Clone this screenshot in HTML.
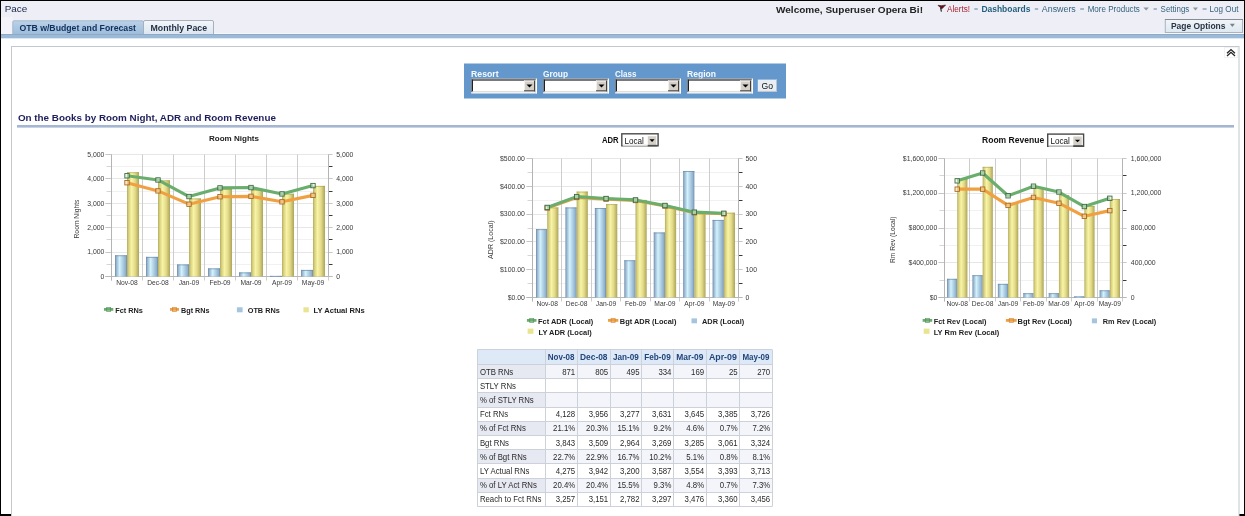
<!DOCTYPE html>
<html><head><meta charset="utf-8"><title>Pace</title>
<style>
html,body{margin:0;padding:0;background:#000;}
body{width:1245px;height:516px;overflow:hidden;font-family:"Liberation Sans", sans-serif;}
svg{display:block;font-family:"Liberation Sans", sans-serif;will-change:transform;}
</style></head><body>
<svg width="1245" height="516" viewBox="0 0 1245 516" shape-rendering="auto">
<defs>
<linearGradient id="gy" x1="0" x2="1" y1="0" y2="0">
<stop offset="0" stop-color="#b4ac60"/><stop offset="0.15" stop-color="#d8d280"/><stop offset="0.38" stop-color="#f8f4a6"/><stop offset="0.68" stop-color="#e2da88"/><stop offset="1" stop-color="#aca458"/>
</linearGradient>
<linearGradient id="gb" x1="0" x2="1" y1="0" y2="0">
<stop offset="0" stop-color="#7088a8"/><stop offset="0.12" stop-color="#98b6d0"/><stop offset="0.38" stop-color="#d2f2fc"/><stop offset="0.62" stop-color="#b2d2e6"/><stop offset="0.88" stop-color="#90b0cc"/><stop offset="1" stop-color="#6c8aa8"/>
</linearGradient>
<linearGradient id="gtab1" x1="0" x2="0" y1="0" y2="1">
<stop offset="0" stop-color="#bcd2e8"/><stop offset="1" stop-color="#9dbddc"/>
</linearGradient>
<linearGradient id="gtab2" x1="0" x2="0" y1="0" y2="1">
<stop offset="0" stop-color="#f4f6fa"/><stop offset="1" stop-color="#dce6f0"/>
</linearGradient>
<linearGradient id="gbtn" x1="0" x2="0" y1="0" y2="1">
<stop offset="0" stop-color="#f2f5f8"/><stop offset="1" stop-color="#dde8f0"/>
</linearGradient>
</defs>

<rect x="0.00" y="0.00" width="1245.00" height="516.00" fill="#000" />
<rect x="1.00" y="1.00" width="1243.00" height="513.00" fill="#ffffff" />
<rect x="1.00" y="1.00" width="1243.00" height="33.00" fill="#eeeef7" />
<text x="4.70" y="12.20" font-size="9.4" fill="#1a2846" textLength="22.60" lengthAdjust="spacingAndGlyphs" >Pace</text>
<rect x="1.00" y="33.00" width="1243.00" height="1.00" fill="#f4f8fc" />
<rect x="1.00" y="34.00" width="1243.00" height="4.00" fill="#9bbad9" />
<line x1="1.00" y1="34.50" x2="1244.00" y2="34.50" stroke="#92a9c2" stroke-width="1" />
<rect x="1.00" y="38.00" width="1243.00" height="1.00" fill="#dce8f3" />
<rect x="1.00" y="17.00" width="11.50" height="17.00" fill="#f3f3f9" />
<path d="M12.5 34 V22 Q12.5 20.5 14 20.5 H142 Q143.5 20.5 143.5 22 V34 Z" fill="url(#gtab1)"/>
<path d="M12.8 34 V22 Q12.8 20.8 14 20.8 H142 Q143.2 20.8 143.2 22" fill="none" stroke="#9fb5cc" stroke-width="0.8"/>
<path d="M143.5 34 V22 Q143.5 20.5 145 20.5 H212 Q213.5 20.5 213.5 22 V34" fill="url(#gtab2)" stroke="#a8b0bc" stroke-width="1"/>
<text x="19.40" y="30.80" font-size="8.3" fill="#112f5c" font-weight="bold" textLength="116.50" lengthAdjust="spacingAndGlyphs" >OTB w/Budget and Forecast</text>
<text x="150.50" y="30.70" font-size="8.3" fill="#1f2d42" font-weight="bold" textLength="56.60" lengthAdjust="spacingAndGlyphs" >Monthly Pace</text>
<text x="776.00" y="13.10" font-size="8.6" fill="#222" font-weight="bold" textLength="147.00" lengthAdjust="spacingAndGlyphs" >Welcome, Superuser Opera Bi!</text>
<path d="M938.0 5.3 Q941.5 6.2 945.6 5.0 L942.0 8.8 Q940.2 7.8 938.0 5.3 Z" fill="#6a1018" stroke="#301010" stroke-width="0.6"/>
<path d="M940.6 7.6 L941.4 11.6" stroke="#201010" stroke-width="1.1" fill="none"/>
<text x="947.00" y="11.80" font-size="8.4" fill="#a81e2c" textLength="23.00" lengthAdjust="spacingAndGlyphs" >Alerts!</text>
<line x1="974.30" y1="9.00" x2="977.80" y2="9.00" stroke="#58809a" stroke-width="1" />
<text x="981.40" y="11.80" font-size="8.4" fill="#23607c" font-weight="bold" textLength="49.00" lengthAdjust="spacingAndGlyphs" >Dashboards</text>
<line x1="1034.80" y1="9.00" x2="1038.20" y2="9.00" stroke="#58809a" stroke-width="1" />
<text x="1041.80" y="11.80" font-size="8.4" fill="#33627a" textLength="34.00" lengthAdjust="spacingAndGlyphs" >Answers</text>
<line x1="1080.20" y1="9.00" x2="1084.00" y2="9.00" stroke="#58809a" stroke-width="1" />
<text x="1087.70" y="11.80" font-size="8.4" fill="#33627a" textLength="52.20" lengthAdjust="spacingAndGlyphs" >More Products</text>
<path d="M1143.4 7.4 H1148.9 L1146.15 10.6 Z" fill="#8a96a0"/>
<line x1="1153.60" y1="9.00" x2="1156.90" y2="9.00" stroke="#58809a" stroke-width="1" />
<text x="1160.60" y="11.80" font-size="8.4" fill="#33627a" textLength="28.70" lengthAdjust="spacingAndGlyphs" >Settings</text>
<path d="M1192.9 7.4 H1198 L1195.45 10.6 Z" fill="#8a96a0"/>
<line x1="1202.60" y1="9.00" x2="1206.60" y2="9.00" stroke="#58809a" stroke-width="1" />
<text x="1209.60" y="11.80" font-size="8.4" fill="#33627a" textLength="28.80" lengthAdjust="spacingAndGlyphs" >Log Out</text>
<rect x="1165.3" y="19.5" width="77.2" height="13" fill="url(#gbtn)" stroke="#a8b4c0" stroke-width="1"/>
<line x1="1165.00" y1="19.50" x2="1243.00" y2="19.50" stroke="#848c96" stroke-width="1" />
<text x="1170.90" y="28.60" font-size="8.3" fill="#2c3444" font-weight="bold" textLength="54.60" lengthAdjust="spacingAndGlyphs" >Page Options</text>
<path d="M1229.8 23.8 H1234.9 L1232.35 27 Z" fill="#7a8490"/>
<rect x="11.5" y="46.5" width="1227.5" height="480" fill="#ffffff" stroke="#c2c8ce" stroke-width="1"/>
<rect x="1224.5" y="47.5" width="13" height="10" fill="none" stroke="#e6e6e6" stroke-width="1" stroke-dasharray="1 1"/>
<path d="M1227 53.2 L1231 49.6 L1235 53.2 M1227 56 L1231 52.3 L1235 56" fill="none" stroke="#222" stroke-width="1.3"/>
<rect x="464.00" y="63.50" width="322.00" height="35.00" fill="#6497cb" />
<text x="471.00" y="77.10" font-size="8.4" fill="#f4faff" font-weight="bold" textLength="27.60" lengthAdjust="spacingAndGlyphs" >Resort</text>
<rect x="471.00" y="78.60" width="66.00" height="14.70" fill="#ffffff" />
<line x1="471.00" y1="79.10" x2="537.00" y2="79.10" stroke="#808080" stroke-width="1" />
<line x1="471.50" y1="78.60" x2="471.50" y2="93.30" stroke="#808080" stroke-width="1" />
<line x1="472.00" y1="80.10" x2="536.00" y2="80.10" stroke="#202020" stroke-width="1" />
<line x1="472.50" y1="79.60" x2="472.50" y2="92.30" stroke="#202020" stroke-width="1" />
<line x1="471.00" y1="92.80" x2="537.00" y2="92.80" stroke="#ffffff" stroke-width="1" />
<line x1="536.50" y1="78.60" x2="536.50" y2="93.30" stroke="#ffffff" stroke-width="1" />
<line x1="472.00" y1="91.80" x2="536.00" y2="91.80" stroke="#d4d0c8" stroke-width="1" />
<line x1="535.50" y1="79.60" x2="535.50" y2="92.30" stroke="#d4d0c8" stroke-width="1" />
<rect x="524.00" y="80.60" width="11.00" height="10.70" fill="#d4d0c8" />
<line x1="524.00" y1="81.10" x2="535.00" y2="81.10" stroke="#f0f0f0" stroke-width="1" />
<line x1="524.50" y1="80.60" x2="524.50" y2="91.30" stroke="#f0f0f0" stroke-width="1" />
<line x1="524.00" y1="90.80" x2="535.00" y2="90.80" stroke="#404040" stroke-width="1" />
<line x1="534.50" y1="80.60" x2="534.50" y2="91.30" stroke="#404040" stroke-width="1" />
<path d="M526.50 84.45 H532.50 L529.50 87.45 Z" fill="#000"/>
<text x="543.00" y="77.10" font-size="8.4" fill="#f4faff" font-weight="bold" textLength="25.00" lengthAdjust="spacingAndGlyphs" >Group</text>
<rect x="543.00" y="78.60" width="66.00" height="14.70" fill="#ffffff" />
<line x1="543.00" y1="79.10" x2="609.00" y2="79.10" stroke="#808080" stroke-width="1" />
<line x1="543.50" y1="78.60" x2="543.50" y2="93.30" stroke="#808080" stroke-width="1" />
<line x1="544.00" y1="80.10" x2="608.00" y2="80.10" stroke="#202020" stroke-width="1" />
<line x1="544.50" y1="79.60" x2="544.50" y2="92.30" stroke="#202020" stroke-width="1" />
<line x1="543.00" y1="92.80" x2="609.00" y2="92.80" stroke="#ffffff" stroke-width="1" />
<line x1="608.50" y1="78.60" x2="608.50" y2="93.30" stroke="#ffffff" stroke-width="1" />
<line x1="544.00" y1="91.80" x2="608.00" y2="91.80" stroke="#d4d0c8" stroke-width="1" />
<line x1="607.50" y1="79.60" x2="607.50" y2="92.30" stroke="#d4d0c8" stroke-width="1" />
<rect x="596.00" y="80.60" width="11.00" height="10.70" fill="#d4d0c8" />
<line x1="596.00" y1="81.10" x2="607.00" y2="81.10" stroke="#f0f0f0" stroke-width="1" />
<line x1="596.50" y1="80.60" x2="596.50" y2="91.30" stroke="#f0f0f0" stroke-width="1" />
<line x1="596.00" y1="90.80" x2="607.00" y2="90.80" stroke="#404040" stroke-width="1" />
<line x1="606.50" y1="80.60" x2="606.50" y2="91.30" stroke="#404040" stroke-width="1" />
<path d="M598.50 84.45 H604.50 L601.50 87.45 Z" fill="#000"/>
<text x="615.00" y="77.10" font-size="8.4" fill="#f4faff" font-weight="bold" textLength="21.50" lengthAdjust="spacingAndGlyphs" >Class</text>
<rect x="615.00" y="78.60" width="66.00" height="14.70" fill="#ffffff" />
<line x1="615.00" y1="79.10" x2="681.00" y2="79.10" stroke="#808080" stroke-width="1" />
<line x1="615.50" y1="78.60" x2="615.50" y2="93.30" stroke="#808080" stroke-width="1" />
<line x1="616.00" y1="80.10" x2="680.00" y2="80.10" stroke="#202020" stroke-width="1" />
<line x1="616.50" y1="79.60" x2="616.50" y2="92.30" stroke="#202020" stroke-width="1" />
<line x1="615.00" y1="92.80" x2="681.00" y2="92.80" stroke="#ffffff" stroke-width="1" />
<line x1="680.50" y1="78.60" x2="680.50" y2="93.30" stroke="#ffffff" stroke-width="1" />
<line x1="616.00" y1="91.80" x2="680.00" y2="91.80" stroke="#d4d0c8" stroke-width="1" />
<line x1="679.50" y1="79.60" x2="679.50" y2="92.30" stroke="#d4d0c8" stroke-width="1" />
<rect x="668.00" y="80.60" width="11.00" height="10.70" fill="#d4d0c8" />
<line x1="668.00" y1="81.10" x2="679.00" y2="81.10" stroke="#f0f0f0" stroke-width="1" />
<line x1="668.50" y1="80.60" x2="668.50" y2="91.30" stroke="#f0f0f0" stroke-width="1" />
<line x1="668.00" y1="90.80" x2="679.00" y2="90.80" stroke="#404040" stroke-width="1" />
<line x1="678.50" y1="80.60" x2="678.50" y2="91.30" stroke="#404040" stroke-width="1" />
<path d="M670.50 84.45 H676.50 L673.50 87.45 Z" fill="#000"/>
<text x="687.00" y="77.10" font-size="8.4" fill="#f4faff" font-weight="bold" textLength="29.00" lengthAdjust="spacingAndGlyphs" >Region</text>
<rect x="687.00" y="78.60" width="66.00" height="14.70" fill="#ffffff" />
<line x1="687.00" y1="79.10" x2="753.00" y2="79.10" stroke="#808080" stroke-width="1" />
<line x1="687.50" y1="78.60" x2="687.50" y2="93.30" stroke="#808080" stroke-width="1" />
<line x1="688.00" y1="80.10" x2="752.00" y2="80.10" stroke="#202020" stroke-width="1" />
<line x1="688.50" y1="79.60" x2="688.50" y2="92.30" stroke="#202020" stroke-width="1" />
<line x1="687.00" y1="92.80" x2="753.00" y2="92.80" stroke="#ffffff" stroke-width="1" />
<line x1="752.50" y1="78.60" x2="752.50" y2="93.30" stroke="#ffffff" stroke-width="1" />
<line x1="688.00" y1="91.80" x2="752.00" y2="91.80" stroke="#d4d0c8" stroke-width="1" />
<line x1="751.50" y1="79.60" x2="751.50" y2="92.30" stroke="#d4d0c8" stroke-width="1" />
<rect x="740.00" y="80.60" width="11.00" height="10.70" fill="#d4d0c8" />
<line x1="740.00" y1="81.10" x2="751.00" y2="81.10" stroke="#f0f0f0" stroke-width="1" />
<line x1="740.50" y1="80.60" x2="740.50" y2="91.30" stroke="#f0f0f0" stroke-width="1" />
<line x1="740.00" y1="90.80" x2="751.00" y2="90.80" stroke="#404040" stroke-width="1" />
<line x1="750.50" y1="80.60" x2="750.50" y2="91.30" stroke="#404040" stroke-width="1" />
<path d="M742.50 84.45 H748.50 L745.50 87.45 Z" fill="#000"/>
<rect x="757.80" y="79.60" width="19.20" height="12.30" fill="#e8eef4" />
<line x1="757.80" y1="91.40" x2="777.00" y2="91.40" stroke="#b8c4d0" stroke-width="1" />
<line x1="776.50" y1="79.60" x2="776.50" y2="91.90" stroke="#b8c4d0" stroke-width="1" />
<text x="761.50" y="89.20" font-size="8.6" fill="#111" textLength="11.50" lengthAdjust="spacingAndGlyphs" >Go</text>
<text x="17.90" y="120.80" font-size="9.5" fill="#1e1e5c" font-weight="bold" textLength="258.00" lengthAdjust="spacingAndGlyphs" >On the Books by Room Night, ADR and Room Revenue</text>
<rect x="17.00" y="125.00" width="1217.00" height="2.60" fill="#a4b6d2" />
<line x1="111.50" y1="264.50" x2="328.50" y2="264.50" stroke="#f1f1f1" stroke-width="1" />
<line x1="106.50" y1="264.50" x2="111.50" y2="264.50" stroke="#d6d6d6" stroke-width="1" />
<line x1="328.50" y1="264.50" x2="332.50" y2="264.50" stroke="#3a3a3a" stroke-width="1" />
<line x1="111.50" y1="239.50" x2="328.50" y2="239.50" stroke="#f1f1f1" stroke-width="1" />
<line x1="106.50" y1="239.50" x2="111.50" y2="239.50" stroke="#d6d6d6" stroke-width="1" />
<line x1="328.50" y1="239.50" x2="332.50" y2="239.50" stroke="#3a3a3a" stroke-width="1" />
<line x1="111.50" y1="215.50" x2="328.50" y2="215.50" stroke="#f1f1f1" stroke-width="1" />
<line x1="106.50" y1="215.50" x2="111.50" y2="215.50" stroke="#d6d6d6" stroke-width="1" />
<line x1="328.50" y1="215.50" x2="332.50" y2="215.50" stroke="#3a3a3a" stroke-width="1" />
<line x1="111.50" y1="191.50" x2="328.50" y2="191.50" stroke="#f1f1f1" stroke-width="1" />
<line x1="106.50" y1="191.50" x2="111.50" y2="191.50" stroke="#d6d6d6" stroke-width="1" />
<line x1="328.50" y1="191.50" x2="332.50" y2="191.50" stroke="#3a3a3a" stroke-width="1" />
<line x1="111.50" y1="166.50" x2="328.50" y2="166.50" stroke="#f1f1f1" stroke-width="1" />
<line x1="106.50" y1="166.50" x2="111.50" y2="166.50" stroke="#d6d6d6" stroke-width="1" />
<line x1="328.50" y1="166.50" x2="332.50" y2="166.50" stroke="#3a3a3a" stroke-width="1" />
<line x1="105.50" y1="276.50" x2="332.50" y2="276.50" stroke="#e6e6e6" stroke-width="1" />
<line x1="105.50" y1="276.50" x2="111.50" y2="276.50" stroke="#c6c6c6" stroke-width="1" />
<line x1="328.50" y1="276.50" x2="332.50" y2="276.50" stroke="#c8c8c8" stroke-width="1" />
<line x1="105.50" y1="252.50" x2="332.50" y2="252.50" stroke="#e6e6e6" stroke-width="1" />
<line x1="105.50" y1="252.50" x2="111.50" y2="252.50" stroke="#c6c6c6" stroke-width="1" />
<line x1="328.50" y1="252.50" x2="332.50" y2="252.50" stroke="#c8c8c8" stroke-width="1" />
<line x1="105.50" y1="227.50" x2="332.50" y2="227.50" stroke="#e6e6e6" stroke-width="1" />
<line x1="105.50" y1="227.50" x2="111.50" y2="227.50" stroke="#c6c6c6" stroke-width="1" />
<line x1="328.50" y1="227.50" x2="332.50" y2="227.50" stroke="#c8c8c8" stroke-width="1" />
<line x1="105.50" y1="203.50" x2="332.50" y2="203.50" stroke="#e6e6e6" stroke-width="1" />
<line x1="105.50" y1="203.50" x2="111.50" y2="203.50" stroke="#c6c6c6" stroke-width="1" />
<line x1="328.50" y1="203.50" x2="332.50" y2="203.50" stroke="#c8c8c8" stroke-width="1" />
<line x1="105.50" y1="178.50" x2="332.50" y2="178.50" stroke="#e6e6e6" stroke-width="1" />
<line x1="105.50" y1="178.50" x2="111.50" y2="178.50" stroke="#c6c6c6" stroke-width="1" />
<line x1="328.50" y1="178.50" x2="332.50" y2="178.50" stroke="#c8c8c8" stroke-width="1" />
<line x1="105.50" y1="154.50" x2="332.50" y2="154.50" stroke="#e6e6e6" stroke-width="1" />
<line x1="105.50" y1="154.50" x2="111.50" y2="154.50" stroke="#c6c6c6" stroke-width="1" />
<line x1="328.50" y1="154.50" x2="332.50" y2="154.50" stroke="#c8c8c8" stroke-width="1" />
<line x1="111.50" y1="154.50" x2="111.50" y2="280.50" stroke="#cdcdcd" stroke-width="1" />
<line x1="142.50" y1="154.50" x2="142.50" y2="280.50" stroke="#cdcdcd" stroke-width="1" />
<line x1="173.50" y1="154.50" x2="173.50" y2="280.50" stroke="#cdcdcd" stroke-width="1" />
<line x1="204.50" y1="154.50" x2="204.50" y2="280.50" stroke="#cdcdcd" stroke-width="1" />
<line x1="235.50" y1="154.50" x2="235.50" y2="280.50" stroke="#cdcdcd" stroke-width="1" />
<line x1="266.50" y1="154.50" x2="266.50" y2="280.50" stroke="#cdcdcd" stroke-width="1" />
<line x1="297.50" y1="154.50" x2="297.50" y2="280.50" stroke="#cdcdcd" stroke-width="1" />
<line x1="328.50" y1="154.50" x2="328.50" y2="280.50" stroke="#cdcdcd" stroke-width="1" />
<line x1="111.50" y1="154.50" x2="111.50" y2="280.50" stroke="#b4b4b4" stroke-width="1" />
<line x1="328.50" y1="154.50" x2="328.50" y2="276.50" stroke="#b4b4b4" stroke-width="1" />
<line x1="105.50" y1="276.50" x2="332.50" y2="276.50" stroke="#b8b8b8" stroke-width="1" />
<rect x="115.00" y="255.25" width="12.00" height="21.25" fill="url(#gb)" />
<line x1="115.00" y1="255.75" x2="127.00" y2="255.75" stroke="#6c8aa8" stroke-width="1" opacity="0.7"/>
<rect x="127.00" y="172.19" width="12.00" height="104.31" fill="url(#gy)" />
<line x1="127.00" y1="172.69" x2="139.00" y2="172.69" stroke="#a8a050" stroke-width="1" opacity="0.6"/>
<rect x="146.00" y="256.86" width="12.00" height="19.64" fill="url(#gb)" />
<line x1="146.00" y1="257.36" x2="158.00" y2="257.36" stroke="#6c8aa8" stroke-width="1" opacity="0.7"/>
<rect x="158.00" y="180.32" width="12.00" height="96.18" fill="url(#gy)" />
<line x1="158.00" y1="180.82" x2="170.00" y2="180.82" stroke="#a8a050" stroke-width="1" opacity="0.6"/>
<rect x="177.00" y="264.42" width="12.00" height="12.08" fill="url(#gb)" />
<line x1="177.00" y1="264.92" x2="189.00" y2="264.92" stroke="#6c8aa8" stroke-width="1" opacity="0.7"/>
<rect x="189.00" y="198.42" width="12.00" height="78.08" fill="url(#gy)" />
<line x1="189.00" y1="198.92" x2="201.00" y2="198.92" stroke="#a8a050" stroke-width="1" opacity="0.6"/>
<rect x="208.00" y="268.35" width="12.00" height="8.15" fill="url(#gb)" />
<line x1="208.00" y1="268.85" x2="220.00" y2="268.85" stroke="#6c8aa8" stroke-width="1" opacity="0.7"/>
<rect x="220.00" y="188.98" width="12.00" height="87.52" fill="url(#gy)" />
<line x1="220.00" y1="189.48" x2="232.00" y2="189.48" stroke="#a8a050" stroke-width="1" opacity="0.6"/>
<rect x="239.00" y="272.38" width="12.00" height="4.12" fill="url(#gb)" />
<line x1="239.00" y1="272.88" x2="251.00" y2="272.88" stroke="#6c8aa8" stroke-width="1" opacity="0.7"/>
<rect x="251.00" y="189.78" width="12.00" height="86.72" fill="url(#gy)" />
<line x1="251.00" y1="190.28" x2="263.00" y2="190.28" stroke="#a8a050" stroke-width="1" opacity="0.6"/>
<rect x="270.00" y="275.89" width="12.00" height="0.61" fill="url(#gb)" />
<line x1="270.00" y1="276.39" x2="282.00" y2="276.39" stroke="#6c8aa8" stroke-width="1" opacity="0.7"/>
<rect x="282.00" y="193.71" width="12.00" height="82.79" fill="url(#gy)" />
<line x1="282.00" y1="194.21" x2="294.00" y2="194.21" stroke="#a8a050" stroke-width="1" opacity="0.6"/>
<rect x="301.00" y="269.91" width="12.00" height="6.59" fill="url(#gb)" />
<line x1="301.00" y1="270.41" x2="313.00" y2="270.41" stroke="#6c8aa8" stroke-width="1" opacity="0.7"/>
<rect x="313.00" y="185.90" width="12.00" height="90.60" fill="url(#gy)" />
<line x1="313.00" y1="186.40" x2="325.00" y2="186.40" stroke="#a8a050" stroke-width="1" opacity="0.6"/>
<polyline points="127.00,182.73 158.00,190.88 189.00,204.18 220.00,196.74 251.00,196.35 282.00,201.81 313.00,195.39" fill="none" stroke="#f0a040" stroke-width="3.1" stroke-linejoin="round"/>
<rect x="124.80" y="180.53" width="4.4" height="4.4" fill="#f8e0b0" fill-opacity="0.55" stroke="#a86a20" stroke-width="0.9"/>
<rect x="155.80" y="188.68" width="4.4" height="4.4" fill="#f8e0b0" fill-opacity="0.55" stroke="#a86a20" stroke-width="0.9"/>
<rect x="186.80" y="201.98" width="4.4" height="4.4" fill="#f8e0b0" fill-opacity="0.55" stroke="#a86a20" stroke-width="0.9"/>
<rect x="217.80" y="194.54" width="4.4" height="4.4" fill="#f8e0b0" fill-opacity="0.55" stroke="#a86a20" stroke-width="0.9"/>
<rect x="248.80" y="194.15" width="4.4" height="4.4" fill="#f8e0b0" fill-opacity="0.55" stroke="#a86a20" stroke-width="0.9"/>
<rect x="279.80" y="199.61" width="4.4" height="4.4" fill="#f8e0b0" fill-opacity="0.55" stroke="#a86a20" stroke-width="0.9"/>
<rect x="310.80" y="193.19" width="4.4" height="4.4" fill="#f8e0b0" fill-opacity="0.55" stroke="#a86a20" stroke-width="0.9"/>
<polyline points="127.00,175.78 158.00,179.97 189.00,196.54 220.00,187.90 251.00,187.56 282.00,193.91 313.00,185.59" fill="none" stroke="#6aae6e" stroke-width="3.1" stroke-linejoin="round"/>
<rect x="124.80" y="173.58" width="4.4" height="4.4" fill="#d8f0d8" fill-opacity="0.55" stroke="#3f6a46" stroke-width="0.9"/>
<rect x="155.80" y="177.77" width="4.4" height="4.4" fill="#d8f0d8" fill-opacity="0.55" stroke="#3f6a46" stroke-width="0.9"/>
<rect x="186.80" y="194.34" width="4.4" height="4.4" fill="#d8f0d8" fill-opacity="0.55" stroke="#3f6a46" stroke-width="0.9"/>
<rect x="217.80" y="185.70" width="4.4" height="4.4" fill="#d8f0d8" fill-opacity="0.55" stroke="#3f6a46" stroke-width="0.9"/>
<rect x="248.80" y="185.36" width="4.4" height="4.4" fill="#d8f0d8" fill-opacity="0.55" stroke="#3f6a46" stroke-width="0.9"/>
<rect x="279.80" y="191.71" width="4.4" height="4.4" fill="#d8f0d8" fill-opacity="0.55" stroke="#3f6a46" stroke-width="0.9"/>
<rect x="310.80" y="183.39" width="4.4" height="4.4" fill="#d8f0d8" fill-opacity="0.55" stroke="#3f6a46" stroke-width="0.9"/>
<text x="104.40" y="278.70" font-size="6.9" fill="#3a3a3a" text-anchor="end" >0</text>
<text x="336.20" y="278.70" font-size="6.9" fill="#3a3a3a" >0</text>
<text x="104.40" y="254.30" font-size="6.9" fill="#3a3a3a" text-anchor="end" >1,000</text>
<text x="336.20" y="254.30" font-size="6.9" fill="#3a3a3a" >1,000</text>
<text x="104.40" y="229.90" font-size="6.9" fill="#3a3a3a" text-anchor="end" >2,000</text>
<text x="336.20" y="229.90" font-size="6.9" fill="#3a3a3a" >2,000</text>
<text x="104.40" y="205.50" font-size="6.9" fill="#3a3a3a" text-anchor="end" >3,000</text>
<text x="336.20" y="205.50" font-size="6.9" fill="#3a3a3a" >3,000</text>
<text x="104.40" y="181.10" font-size="6.9" fill="#3a3a3a" text-anchor="end" >4,000</text>
<text x="336.20" y="181.10" font-size="6.9" fill="#3a3a3a" >4,000</text>
<text x="104.40" y="156.70" font-size="6.9" fill="#3a3a3a" text-anchor="end" >5,000</text>
<text x="336.20" y="156.70" font-size="6.9" fill="#3a3a3a" >5,000</text>
<text x="127.00" y="285.00" font-size="6.7" fill="#3a3a3a" text-anchor="middle" >Nov-08</text>
<text x="158.00" y="285.00" font-size="6.7" fill="#3a3a3a" text-anchor="middle" >Dec-08</text>
<text x="189.00" y="285.00" font-size="6.7" fill="#3a3a3a" text-anchor="middle" >Jan-09</text>
<text x="220.00" y="285.00" font-size="6.7" fill="#3a3a3a" text-anchor="middle" >Feb-09</text>
<text x="251.00" y="285.00" font-size="6.7" fill="#3a3a3a" text-anchor="middle" >Mar-09</text>
<text x="282.00" y="285.00" font-size="6.7" fill="#3a3a3a" text-anchor="middle" >Apr-09</text>
<text x="313.00" y="285.00" font-size="6.7" fill="#3a3a3a" text-anchor="middle" >May-09</text>
<text x="0" y="0" font-size="7.4" fill="#3a3a3a" text-anchor="middle" textLength="39.00" lengthAdjust="spacingAndGlyphs" transform="translate(78.50,219.00) rotate(-90)">Room Nights</text>
<text x="234.00" y="141.40" font-size="7.9" fill="#222" font-weight="bold" text-anchor="middle" textLength="50.00" lengthAdjust="spacingAndGlyphs" >Room Nights</text>
<rect x="104.00" y="308.00" width="9.30" height="2.80" fill="#6aae6e" />
<rect x="106.65" y="307.40" width="4.0" height="4.0" fill="none" stroke="#4f8a56" stroke-width="0.8" opacity="0.8"/>
<text x="115.20" y="312.90" font-size="7.3" fill="#1e1e1e" font-weight="bold" textLength="27.70" lengthAdjust="spacingAndGlyphs" >Fct RNs</text>
<rect x="170.00" y="308.00" width="9.00" height="2.80" fill="#f0a040" />
<rect x="172.50" y="307.40" width="4.0" height="4.0" fill="none" stroke="#c88030" stroke-width="0.8" opacity="0.8"/>
<text x="181.00" y="312.90" font-size="7.3" fill="#1e1e1e" font-weight="bold" textLength="28.50" lengthAdjust="spacingAndGlyphs" >Bgt RNs</text>
<rect x="236.90" y="307.30" width="5.70" height="5.00" fill="#a4c4e0" />
<text x="247.70" y="312.90" font-size="7.3" fill="#1e1e1e" font-weight="bold" textLength="32.10" lengthAdjust="spacingAndGlyphs" >OTB RNs</text>
<rect x="303.40" y="307.30" width="5.40" height="5.00" fill="#e8e490" />
<text x="313.50" y="312.90" font-size="7.3" fill="#1e1e1e" font-weight="bold" textLength="51.30" lengthAdjust="spacingAndGlyphs" >LY Actual RNs</text>
<line x1="532.50" y1="283.50" x2="738.50" y2="283.50" stroke="#f1f1f1" stroke-width="1" />
<line x1="527.50" y1="283.50" x2="532.50" y2="283.50" stroke="#d6d6d6" stroke-width="1" />
<line x1="738.50" y1="283.50" x2="742.50" y2="283.50" stroke="#3a3a3a" stroke-width="1" />
<line x1="532.50" y1="255.50" x2="738.50" y2="255.50" stroke="#f1f1f1" stroke-width="1" />
<line x1="527.50" y1="255.50" x2="532.50" y2="255.50" stroke="#d6d6d6" stroke-width="1" />
<line x1="738.50" y1="255.50" x2="742.50" y2="255.50" stroke="#3a3a3a" stroke-width="1" />
<line x1="532.50" y1="228.50" x2="738.50" y2="228.50" stroke="#f1f1f1" stroke-width="1" />
<line x1="527.50" y1="228.50" x2="532.50" y2="228.50" stroke="#d6d6d6" stroke-width="1" />
<line x1="738.50" y1="228.50" x2="742.50" y2="228.50" stroke="#3a3a3a" stroke-width="1" />
<line x1="532.50" y1="200.50" x2="738.50" y2="200.50" stroke="#f1f1f1" stroke-width="1" />
<line x1="527.50" y1="200.50" x2="532.50" y2="200.50" stroke="#d6d6d6" stroke-width="1" />
<line x1="738.50" y1="200.50" x2="742.50" y2="200.50" stroke="#3a3a3a" stroke-width="1" />
<line x1="532.50" y1="172.50" x2="738.50" y2="172.50" stroke="#f1f1f1" stroke-width="1" />
<line x1="527.50" y1="172.50" x2="532.50" y2="172.50" stroke="#d6d6d6" stroke-width="1" />
<line x1="738.50" y1="172.50" x2="742.50" y2="172.50" stroke="#3a3a3a" stroke-width="1" />
<line x1="526.50" y1="297.50" x2="742.50" y2="297.50" stroke="#e6e6e6" stroke-width="1" />
<line x1="526.50" y1="297.50" x2="532.50" y2="297.50" stroke="#c6c6c6" stroke-width="1" />
<line x1="738.50" y1="297.50" x2="742.50" y2="297.50" stroke="#c8c8c8" stroke-width="1" />
<line x1="526.50" y1="269.50" x2="742.50" y2="269.50" stroke="#e6e6e6" stroke-width="1" />
<line x1="526.50" y1="269.50" x2="532.50" y2="269.50" stroke="#c6c6c6" stroke-width="1" />
<line x1="738.50" y1="269.50" x2="742.50" y2="269.50" stroke="#c8c8c8" stroke-width="1" />
<line x1="526.50" y1="241.50" x2="742.50" y2="241.50" stroke="#e6e6e6" stroke-width="1" />
<line x1="526.50" y1="241.50" x2="532.50" y2="241.50" stroke="#c6c6c6" stroke-width="1" />
<line x1="738.50" y1="241.50" x2="742.50" y2="241.50" stroke="#c8c8c8" stroke-width="1" />
<line x1="526.50" y1="214.50" x2="742.50" y2="214.50" stroke="#e6e6e6" stroke-width="1" />
<line x1="526.50" y1="214.50" x2="532.50" y2="214.50" stroke="#c6c6c6" stroke-width="1" />
<line x1="738.50" y1="214.50" x2="742.50" y2="214.50" stroke="#c8c8c8" stroke-width="1" />
<line x1="526.50" y1="186.50" x2="742.50" y2="186.50" stroke="#e6e6e6" stroke-width="1" />
<line x1="526.50" y1="186.50" x2="532.50" y2="186.50" stroke="#c6c6c6" stroke-width="1" />
<line x1="738.50" y1="186.50" x2="742.50" y2="186.50" stroke="#c8c8c8" stroke-width="1" />
<line x1="526.50" y1="158.50" x2="742.50" y2="158.50" stroke="#e6e6e6" stroke-width="1" />
<line x1="526.50" y1="158.50" x2="532.50" y2="158.50" stroke="#c6c6c6" stroke-width="1" />
<line x1="738.50" y1="158.50" x2="742.50" y2="158.50" stroke="#c8c8c8" stroke-width="1" />
<line x1="532.50" y1="158.50" x2="532.50" y2="301.50" stroke="#cdcdcd" stroke-width="1" />
<line x1="561.50" y1="158.50" x2="561.50" y2="301.50" stroke="#cdcdcd" stroke-width="1" />
<line x1="591.50" y1="158.50" x2="591.50" y2="301.50" stroke="#cdcdcd" stroke-width="1" />
<line x1="620.50" y1="158.50" x2="620.50" y2="301.50" stroke="#cdcdcd" stroke-width="1" />
<line x1="650.50" y1="158.50" x2="650.50" y2="301.50" stroke="#cdcdcd" stroke-width="1" />
<line x1="679.50" y1="158.50" x2="679.50" y2="301.50" stroke="#cdcdcd" stroke-width="1" />
<line x1="709.50" y1="158.50" x2="709.50" y2="301.50" stroke="#cdcdcd" stroke-width="1" />
<line x1="738.50" y1="158.50" x2="738.50" y2="301.50" stroke="#cdcdcd" stroke-width="1" />
<line x1="532.50" y1="158.50" x2="532.50" y2="301.50" stroke="#b4b4b4" stroke-width="1" />
<line x1="738.50" y1="158.50" x2="738.50" y2="297.50" stroke="#b4b4b4" stroke-width="1" />
<line x1="526.50" y1="297.50" x2="742.50" y2="297.50" stroke="#b8b8b8" stroke-width="1" />
<rect x="536.01" y="229.11" width="11.20" height="68.39" fill="url(#gb)" />
<line x1="536.01" y1="229.61" x2="547.21" y2="229.61" stroke="#6c8aa8" stroke-width="1" opacity="0.7"/>
<rect x="547.21" y="207.43" width="11.20" height="90.07" fill="url(#gy)" />
<line x1="547.21" y1="207.93" x2="558.41" y2="207.93" stroke="#a8a050" stroke-width="1" opacity="0.6"/>
<rect x="565.44" y="207.43" width="11.20" height="90.07" fill="url(#gb)" />
<line x1="565.44" y1="207.93" x2="576.64" y2="207.93" stroke="#6c8aa8" stroke-width="1" opacity="0.7"/>
<rect x="576.64" y="191.58" width="11.20" height="105.92" fill="url(#gy)" />
<line x1="576.64" y1="192.08" x2="587.84" y2="192.08" stroke="#a8a050" stroke-width="1" opacity="0.6"/>
<rect x="594.87" y="207.98" width="11.20" height="89.52" fill="url(#gb)" />
<line x1="594.87" y1="208.48" x2="606.07" y2="208.48" stroke="#6c8aa8" stroke-width="1" opacity="0.7"/>
<rect x="606.07" y="204.09" width="11.20" height="93.41" fill="url(#gy)" />
<line x1="606.07" y1="204.59" x2="617.27" y2="204.59" stroke="#a8a050" stroke-width="1" opacity="0.6"/>
<rect x="624.30" y="260.25" width="11.20" height="37.25" fill="url(#gb)" />
<line x1="624.30" y1="260.75" x2="635.50" y2="260.75" stroke="#6c8aa8" stroke-width="1" opacity="0.7"/>
<rect x="635.50" y="199.92" width="11.20" height="97.58" fill="url(#gy)" />
<line x1="635.50" y1="200.42" x2="646.70" y2="200.42" stroke="#a8a050" stroke-width="1" opacity="0.6"/>
<rect x="653.73" y="232.45" width="11.20" height="65.05" fill="url(#gb)" />
<line x1="653.73" y1="232.95" x2="664.93" y2="232.95" stroke="#6c8aa8" stroke-width="1" opacity="0.7"/>
<rect x="664.93" y="207.98" width="11.20" height="89.52" fill="url(#gy)" />
<line x1="664.93" y1="208.48" x2="676.13" y2="208.48" stroke="#a8a050" stroke-width="1" opacity="0.6"/>
<rect x="683.16" y="171.01" width="11.20" height="126.49" fill="url(#gb)" />
<line x1="683.16" y1="171.51" x2="694.36" y2="171.51" stroke="#6c8aa8" stroke-width="1" opacity="0.7"/>
<rect x="694.36" y="213.27" width="11.20" height="84.23" fill="url(#gy)" />
<line x1="694.36" y1="213.77" x2="705.56" y2="213.77" stroke="#a8a050" stroke-width="1" opacity="0.6"/>
<rect x="712.59" y="219.94" width="11.20" height="77.56" fill="url(#gb)" />
<line x1="712.59" y1="220.44" x2="723.79" y2="220.44" stroke="#6c8aa8" stroke-width="1" opacity="0.7"/>
<rect x="723.79" y="212.71" width="11.20" height="84.79" fill="url(#gy)" />
<line x1="723.79" y1="213.21" x2="734.99" y2="213.21" stroke="#a8a050" stroke-width="1" opacity="0.6"/>
<polyline points="547.21,207.98 576.64,197.42 606.07,199.09 635.50,200.48 664.93,206.04 694.36,212.71 723.79,213.82" fill="none" stroke="#f0a040" stroke-width="3.1" stroke-linejoin="round"/>
<rect x="545.01" y="205.78" width="4.4" height="4.4" fill="#f8e0b0" fill-opacity="0.55" stroke="#a86a20" stroke-width="0.9"/>
<rect x="574.44" y="195.22" width="4.4" height="4.4" fill="#f8e0b0" fill-opacity="0.55" stroke="#a86a20" stroke-width="0.9"/>
<rect x="603.87" y="196.89" width="4.4" height="4.4" fill="#f8e0b0" fill-opacity="0.55" stroke="#a86a20" stroke-width="0.9"/>
<rect x="633.30" y="198.28" width="4.4" height="4.4" fill="#f8e0b0" fill-opacity="0.55" stroke="#a86a20" stroke-width="0.9"/>
<rect x="662.73" y="203.84" width="4.4" height="4.4" fill="#f8e0b0" fill-opacity="0.55" stroke="#a86a20" stroke-width="0.9"/>
<rect x="692.16" y="210.51" width="4.4" height="4.4" fill="#f8e0b0" fill-opacity="0.55" stroke="#a86a20" stroke-width="0.9"/>
<rect x="721.59" y="211.62" width="4.4" height="4.4" fill="#f8e0b0" fill-opacity="0.55" stroke="#a86a20" stroke-width="0.9"/>
<polyline points="547.21,207.43 576.64,196.59 606.07,198.53 635.50,199.92 664.93,205.48 694.36,212.15 723.79,213.27" fill="none" stroke="#6aae6e" stroke-width="3.1" stroke-linejoin="round"/>
<rect x="545.01" y="205.23" width="4.4" height="4.4" fill="#d8f0d8" fill-opacity="0.55" stroke="#3f6a46" stroke-width="0.9"/>
<rect x="574.44" y="194.39" width="4.4" height="4.4" fill="#d8f0d8" fill-opacity="0.55" stroke="#3f6a46" stroke-width="0.9"/>
<rect x="603.87" y="196.33" width="4.4" height="4.4" fill="#d8f0d8" fill-opacity="0.55" stroke="#3f6a46" stroke-width="0.9"/>
<rect x="633.30" y="197.72" width="4.4" height="4.4" fill="#d8f0d8" fill-opacity="0.55" stroke="#3f6a46" stroke-width="0.9"/>
<rect x="662.73" y="203.28" width="4.4" height="4.4" fill="#d8f0d8" fill-opacity="0.55" stroke="#3f6a46" stroke-width="0.9"/>
<rect x="692.16" y="209.95" width="4.4" height="4.4" fill="#d8f0d8" fill-opacity="0.55" stroke="#3f6a46" stroke-width="0.9"/>
<rect x="721.59" y="211.07" width="4.4" height="4.4" fill="#d8f0d8" fill-opacity="0.55" stroke="#3f6a46" stroke-width="0.9"/>
<text x="524.90" y="299.70" font-size="6.9" fill="#3a3a3a" text-anchor="end" >$0.00</text>
<text x="745.50" y="299.70" font-size="6.9" fill="#3a3a3a" >0</text>
<text x="524.90" y="271.90" font-size="6.9" fill="#3a3a3a" text-anchor="end" >$100.00</text>
<text x="745.50" y="271.90" font-size="6.9" fill="#3a3a3a" >100</text>
<text x="524.90" y="244.10" font-size="6.9" fill="#3a3a3a" text-anchor="end" >$200.00</text>
<text x="745.50" y="244.10" font-size="6.9" fill="#3a3a3a" >200</text>
<text x="524.90" y="216.30" font-size="6.9" fill="#3a3a3a" text-anchor="end" >$300.00</text>
<text x="745.50" y="216.30" font-size="6.9" fill="#3a3a3a" >300</text>
<text x="524.90" y="188.50" font-size="6.9" fill="#3a3a3a" text-anchor="end" >$400.00</text>
<text x="745.50" y="188.50" font-size="6.9" fill="#3a3a3a" >400</text>
<text x="524.90" y="160.70" font-size="6.9" fill="#3a3a3a" text-anchor="end" >$500.00</text>
<text x="745.50" y="160.70" font-size="6.9" fill="#3a3a3a" >500</text>
<text x="547.21" y="305.70" font-size="6.7" fill="#3a3a3a" text-anchor="middle" >Nov-08</text>
<text x="576.64" y="305.70" font-size="6.7" fill="#3a3a3a" text-anchor="middle" >Dec-08</text>
<text x="606.07" y="305.70" font-size="6.7" fill="#3a3a3a" text-anchor="middle" >Jan-09</text>
<text x="635.50" y="305.70" font-size="6.7" fill="#3a3a3a" text-anchor="middle" >Feb-09</text>
<text x="664.93" y="305.70" font-size="6.7" fill="#3a3a3a" text-anchor="middle" >Mar-09</text>
<text x="694.36" y="305.70" font-size="6.7" fill="#3a3a3a" text-anchor="middle" >Apr-09</text>
<text x="723.79" y="305.70" font-size="6.7" fill="#3a3a3a" text-anchor="middle" >May-09</text>
<text x="0" y="0" font-size="7.4" fill="#3a3a3a" text-anchor="middle" textLength="38.40" lengthAdjust="spacingAndGlyphs" transform="translate(492.80,239.70) rotate(-90)">ADR (Local)</text>
<text x="602.00" y="143.40" font-size="8.5" fill="#111" font-weight="bold" textLength="16.60" lengthAdjust="spacingAndGlyphs" >ADR</text>
<rect x="621.10" y="133.10" width="37.70" height="13.40" fill="#ffffff" />
<rect x="621.80" y="133.80" width="36.30" height="12.00" fill="none" stroke="#4a4a4a" stroke-width="1.4"/>
<line x1="622.70" y1="145.50" x2="647.80" y2="145.50" stroke="#d8d8d8" stroke-width="1.6" />
<rect x="647.80" y="136.20" width="8.50" height="8.90" fill="#d4d0c8" />
<line x1="647.80" y1="145.60" x2="657.30" y2="145.60" stroke="#505050" stroke-width="1.5" />
<path d="M649.45 139.35 H654.65 L652.05 142.05 Z" fill="#000"/>
<text x="624.50" y="143.50" font-size="8.6" fill="#111" textLength="19.40" lengthAdjust="spacingAndGlyphs" >Local</text>
<rect x="526.90" y="319.00" width="9.60" height="2.80" fill="#6aae6e" />
<rect x="529.70" y="318.40" width="4.0" height="4.0" fill="none" stroke="#4f8a56" stroke-width="0.8" opacity="0.8"/>
<text x="538.00" y="323.70" font-size="7.3" fill="#1e1e1e" font-weight="bold" textLength="55.30" lengthAdjust="spacingAndGlyphs" >Fct ADR (Local)</text>
<rect x="608.00" y="319.00" width="10.30" height="2.80" fill="#f0a040" />
<rect x="611.15" y="318.40" width="4.0" height="4.0" fill="none" stroke="#c88030" stroke-width="0.8" opacity="0.8"/>
<text x="619.80" y="323.70" font-size="7.3" fill="#1e1e1e" font-weight="bold" textLength="56.60" lengthAdjust="spacingAndGlyphs" >Bgt ADR (Local)</text>
<rect x="691.50" y="318.40" width="5.50" height="4.90" fill="#a4c4e0" />
<text x="702.00" y="323.70" font-size="7.3" fill="#1e1e1e" font-weight="bold" textLength="42.20" lengthAdjust="spacingAndGlyphs" >ADR (Local)</text>
<rect x="527.60" y="328.60" width="5.80" height="5.20" fill="#e8e490" />
<text x="538.60" y="334.70" font-size="7.3" fill="#1e1e1e" font-weight="bold" textLength="53.20" lengthAdjust="spacingAndGlyphs" >LY ADR (Local)</text>
<line x1="944.50" y1="280.50" x2="1122.50" y2="280.50" stroke="#f1f1f1" stroke-width="1" />
<line x1="939.50" y1="280.50" x2="944.50" y2="280.50" stroke="#d6d6d6" stroke-width="1" />
<line x1="1122.50" y1="280.50" x2="1126.50" y2="280.50" stroke="#3a3a3a" stroke-width="1" />
<line x1="944.50" y1="245.50" x2="1122.50" y2="245.50" stroke="#f1f1f1" stroke-width="1" />
<line x1="939.50" y1="245.50" x2="944.50" y2="245.50" stroke="#d6d6d6" stroke-width="1" />
<line x1="1122.50" y1="245.50" x2="1126.50" y2="245.50" stroke="#3a3a3a" stroke-width="1" />
<line x1="944.50" y1="210.50" x2="1122.50" y2="210.50" stroke="#f1f1f1" stroke-width="1" />
<line x1="939.50" y1="210.50" x2="944.50" y2="210.50" stroke="#d6d6d6" stroke-width="1" />
<line x1="1122.50" y1="210.50" x2="1126.50" y2="210.50" stroke="#3a3a3a" stroke-width="1" />
<line x1="944.50" y1="175.50" x2="1122.50" y2="175.50" stroke="#f1f1f1" stroke-width="1" />
<line x1="939.50" y1="175.50" x2="944.50" y2="175.50" stroke="#d6d6d6" stroke-width="1" />
<line x1="1122.50" y1="175.50" x2="1126.50" y2="175.50" stroke="#3a3a3a" stroke-width="1" />
<line x1="938.50" y1="297.50" x2="1126.50" y2="297.50" stroke="#e6e6e6" stroke-width="1" />
<line x1="938.50" y1="297.50" x2="944.50" y2="297.50" stroke="#c6c6c6" stroke-width="1" />
<line x1="1122.50" y1="297.50" x2="1126.50" y2="297.50" stroke="#c8c8c8" stroke-width="1" />
<line x1="938.50" y1="262.50" x2="1126.50" y2="262.50" stroke="#e6e6e6" stroke-width="1" />
<line x1="938.50" y1="262.50" x2="944.50" y2="262.50" stroke="#c6c6c6" stroke-width="1" />
<line x1="1122.50" y1="262.50" x2="1126.50" y2="262.50" stroke="#c8c8c8" stroke-width="1" />
<line x1="938.50" y1="228.50" x2="1126.50" y2="228.50" stroke="#e6e6e6" stroke-width="1" />
<line x1="938.50" y1="228.50" x2="944.50" y2="228.50" stroke="#c6c6c6" stroke-width="1" />
<line x1="1122.50" y1="228.50" x2="1126.50" y2="228.50" stroke="#c8c8c8" stroke-width="1" />
<line x1="938.50" y1="193.50" x2="1126.50" y2="193.50" stroke="#e6e6e6" stroke-width="1" />
<line x1="938.50" y1="193.50" x2="944.50" y2="193.50" stroke="#c6c6c6" stroke-width="1" />
<line x1="1122.50" y1="193.50" x2="1126.50" y2="193.50" stroke="#c8c8c8" stroke-width="1" />
<line x1="938.50" y1="158.50" x2="1126.50" y2="158.50" stroke="#e6e6e6" stroke-width="1" />
<line x1="938.50" y1="158.50" x2="944.50" y2="158.50" stroke="#c6c6c6" stroke-width="1" />
<line x1="1122.50" y1="158.50" x2="1126.50" y2="158.50" stroke="#c8c8c8" stroke-width="1" />
<line x1="944.50" y1="158.50" x2="944.50" y2="301.50" stroke="#cdcdcd" stroke-width="1" />
<line x1="969.50" y1="158.50" x2="969.50" y2="301.50" stroke="#cdcdcd" stroke-width="1" />
<line x1="995.50" y1="158.50" x2="995.50" y2="301.50" stroke="#cdcdcd" stroke-width="1" />
<line x1="1020.50" y1="158.50" x2="1020.50" y2="301.50" stroke="#cdcdcd" stroke-width="1" />
<line x1="1046.50" y1="158.50" x2="1046.50" y2="301.50" stroke="#cdcdcd" stroke-width="1" />
<line x1="1071.50" y1="158.50" x2="1071.50" y2="301.50" stroke="#cdcdcd" stroke-width="1" />
<line x1="1097.50" y1="158.50" x2="1097.50" y2="301.50" stroke="#cdcdcd" stroke-width="1" />
<line x1="1122.50" y1="158.50" x2="1122.50" y2="301.50" stroke="#cdcdcd" stroke-width="1" />
<line x1="944.50" y1="158.50" x2="944.50" y2="301.50" stroke="#b4b4b4" stroke-width="1" />
<line x1="1122.50" y1="158.50" x2="1122.50" y2="297.50" stroke="#b4b4b4" stroke-width="1" />
<line x1="938.50" y1="297.50" x2="1126.50" y2="297.50" stroke="#b8b8b8" stroke-width="1" />
<rect x="947.01" y="278.82" width="10.20" height="18.68" fill="url(#gb)" />
<line x1="947.01" y1="279.32" x2="957.21" y2="279.32" stroke="#6c8aa8" stroke-width="1" opacity="0.7"/>
<rect x="957.21" y="178.92" width="10.20" height="118.58" fill="url(#gy)" />
<line x1="957.21" y1="179.42" x2="967.41" y2="179.42" stroke="#a8a050" stroke-width="1" opacity="0.6"/>
<rect x="972.44" y="275.17" width="10.20" height="22.33" fill="url(#gb)" />
<line x1="972.44" y1="275.67" x2="982.64" y2="275.67" stroke="#6c8aa8" stroke-width="1" opacity="0.7"/>
<rect x="982.64" y="166.84" width="10.20" height="130.66" fill="url(#gy)" />
<line x1="982.64" y1="167.34" x2="992.84" y2="167.34" stroke="#a8a050" stroke-width="1" opacity="0.6"/>
<rect x="997.87" y="283.86" width="10.20" height="13.64" fill="url(#gb)" />
<line x1="997.87" y1="284.36" x2="1008.07" y2="284.36" stroke="#6c8aa8" stroke-width="1" opacity="0.7"/>
<rect x="1008.07" y="202.81" width="10.20" height="94.69" fill="url(#gy)" />
<line x1="1008.07" y1="203.31" x2="1018.27" y2="203.31" stroke="#a8a050" stroke-width="1" opacity="0.6"/>
<rect x="1023.30" y="293.16" width="10.20" height="4.34" fill="url(#gb)" />
<line x1="1023.30" y1="293.66" x2="1033.50" y2="293.66" stroke="#6c8aa8" stroke-width="1" opacity="0.7"/>
<rect x="1033.50" y="187.95" width="10.20" height="109.55" fill="url(#gy)" />
<line x1="1033.50" y1="188.45" x2="1043.70" y2="188.45" stroke="#a8a050" stroke-width="1" opacity="0.6"/>
<rect x="1048.73" y="293.16" width="10.20" height="4.34" fill="url(#gb)" />
<line x1="1048.73" y1="293.66" x2="1058.93" y2="293.66" stroke="#6c8aa8" stroke-width="1" opacity="0.7"/>
<rect x="1058.93" y="195.16" width="10.20" height="102.34" fill="url(#gy)" />
<line x1="1058.93" y1="195.66" x2="1069.13" y2="195.66" stroke="#a8a050" stroke-width="1" opacity="0.6"/>
<rect x="1074.16" y="296.37" width="10.20" height="1.13" fill="url(#gb)" />
<line x1="1074.16" y1="296.87" x2="1084.36" y2="296.87" stroke="#6c8aa8" stroke-width="1" opacity="0.7"/>
<rect x="1084.36" y="205.93" width="10.20" height="91.57" fill="url(#gy)" />
<line x1="1084.36" y1="206.43" x2="1094.56" y2="206.43" stroke="#a8a050" stroke-width="1" opacity="0.6"/>
<rect x="1099.59" y="290.29" width="10.20" height="7.21" fill="url(#gb)" />
<line x1="1099.59" y1="290.79" x2="1109.79" y2="290.79" stroke="#6c8aa8" stroke-width="1" opacity="0.7"/>
<rect x="1109.79" y="198.98" width="10.20" height="98.52" fill="url(#gy)" />
<line x1="1109.79" y1="199.48" x2="1119.99" y2="199.48" stroke="#a8a050" stroke-width="1" opacity="0.6"/>
<polyline points="957.21,189.17 982.64,189.17 1008.07,205.41 1033.50,197.42 1058.93,203.24 1084.36,216.27 1109.79,210.62" fill="none" stroke="#f0a040" stroke-width="3.1" stroke-linejoin="round"/>
<rect x="955.01" y="186.97" width="4.4" height="4.4" fill="#f8e0b0" fill-opacity="0.55" stroke="#a86a20" stroke-width="0.9"/>
<rect x="980.44" y="186.97" width="4.4" height="4.4" fill="#f8e0b0" fill-opacity="0.55" stroke="#a86a20" stroke-width="0.9"/>
<rect x="1005.87" y="203.21" width="4.4" height="4.4" fill="#f8e0b0" fill-opacity="0.55" stroke="#a86a20" stroke-width="0.9"/>
<rect x="1031.30" y="195.22" width="4.4" height="4.4" fill="#f8e0b0" fill-opacity="0.55" stroke="#a86a20" stroke-width="0.9"/>
<rect x="1056.73" y="201.04" width="4.4" height="4.4" fill="#f8e0b0" fill-opacity="0.55" stroke="#a86a20" stroke-width="0.9"/>
<rect x="1082.16" y="214.07" width="4.4" height="4.4" fill="#f8e0b0" fill-opacity="0.55" stroke="#a86a20" stroke-width="0.9"/>
<rect x="1107.59" y="208.43" width="4.4" height="4.4" fill="#f8e0b0" fill-opacity="0.55" stroke="#a86a20" stroke-width="0.9"/>
<polyline points="957.21,180.83 982.64,173.01 1008.07,195.77 1033.50,186.21 1058.93,192.03 1084.36,206.54 1109.79,198.29" fill="none" stroke="#6aae6e" stroke-width="3.1" stroke-linejoin="round"/>
<rect x="955.01" y="178.63" width="4.4" height="4.4" fill="#d8f0d8" fill-opacity="0.55" stroke="#3f6a46" stroke-width="0.9"/>
<rect x="980.44" y="170.81" width="4.4" height="4.4" fill="#d8f0d8" fill-opacity="0.55" stroke="#3f6a46" stroke-width="0.9"/>
<rect x="1005.87" y="193.57" width="4.4" height="4.4" fill="#d8f0d8" fill-opacity="0.55" stroke="#3f6a46" stroke-width="0.9"/>
<rect x="1031.30" y="184.01" width="4.4" height="4.4" fill="#d8f0d8" fill-opacity="0.55" stroke="#3f6a46" stroke-width="0.9"/>
<rect x="1056.73" y="189.83" width="4.4" height="4.4" fill="#d8f0d8" fill-opacity="0.55" stroke="#3f6a46" stroke-width="0.9"/>
<rect x="1082.16" y="204.34" width="4.4" height="4.4" fill="#d8f0d8" fill-opacity="0.55" stroke="#3f6a46" stroke-width="0.9"/>
<rect x="1107.59" y="196.09" width="4.4" height="4.4" fill="#d8f0d8" fill-opacity="0.55" stroke="#3f6a46" stroke-width="0.9"/>
<text x="937.30" y="299.70" font-size="6.9" fill="#3a3a3a" text-anchor="end" >$0</text>
<text x="1130.80" y="299.70" font-size="6.9" fill="#3a3a3a" >0</text>
<text x="937.30" y="264.95" font-size="6.9" fill="#3a3a3a" text-anchor="end" >$400,000</text>
<text x="1130.80" y="264.95" font-size="6.9" fill="#3a3a3a" >400,000</text>
<text x="937.30" y="230.20" font-size="6.9" fill="#3a3a3a" text-anchor="end" >$800,000</text>
<text x="1130.80" y="230.20" font-size="6.9" fill="#3a3a3a" >800,000</text>
<text x="937.30" y="195.45" font-size="6.9" fill="#3a3a3a" text-anchor="end" >$1,200,000</text>
<text x="1130.80" y="195.45" font-size="6.9" fill="#3a3a3a" >1,200,000</text>
<text x="937.30" y="160.70" font-size="6.9" fill="#3a3a3a" text-anchor="end" >$1,600,000</text>
<text x="1130.80" y="160.70" font-size="6.9" fill="#3a3a3a" >1,600,000</text>
<text x="957.21" y="305.70" font-size="6.7" fill="#3a3a3a" text-anchor="middle" >Nov-08</text>
<text x="982.64" y="305.70" font-size="6.7" fill="#3a3a3a" text-anchor="middle" >Dec-08</text>
<text x="1008.07" y="305.70" font-size="6.7" fill="#3a3a3a" text-anchor="middle" >Jan-09</text>
<text x="1033.50" y="305.70" font-size="6.7" fill="#3a3a3a" text-anchor="middle" >Feb-09</text>
<text x="1058.93" y="305.70" font-size="6.7" fill="#3a3a3a" text-anchor="middle" >Mar-09</text>
<text x="1084.36" y="305.70" font-size="6.7" fill="#3a3a3a" text-anchor="middle" >Apr-09</text>
<text x="1109.79" y="305.70" font-size="6.7" fill="#3a3a3a" text-anchor="middle" >May-09</text>
<text x="0" y="0" font-size="7.4" fill="#3a3a3a" text-anchor="middle" textLength="46.40" lengthAdjust="spacingAndGlyphs" transform="translate(895.00,239.80) rotate(-90)">Rm Rev (Local)</text>
<text x="982.00" y="143.30" font-size="8.5" fill="#111" font-weight="bold" textLength="62.20" lengthAdjust="spacingAndGlyphs" >Room Revenue</text>
<rect x="1047.00" y="133.40" width="37.30" height="13.60" fill="#ffffff" />
<rect x="1047.70" y="134.10" width="35.90" height="12.20" fill="none" stroke="#4a4a4a" stroke-width="1.4"/>
<line x1="1048.60" y1="146.00" x2="1073.30" y2="146.00" stroke="#d8d8d8" stroke-width="1.6" />
<rect x="1073.30" y="136.50" width="8.50" height="8.90" fill="#d4d0c8" />
<line x1="1073.30" y1="145.90" x2="1082.80" y2="145.90" stroke="#505050" stroke-width="1.5" />
<path d="M1074.95 139.65 H1080.15 L1077.55 142.35 Z" fill="#000"/>
<text x="1050.40" y="143.80" font-size="8.6" fill="#111" textLength="19.40" lengthAdjust="spacingAndGlyphs" >Local</text>
<rect x="922.60" y="319.00" width="9.60" height="2.80" fill="#6aae6e" />
<rect x="925.40" y="318.40" width="4.0" height="4.0" fill="none" stroke="#4f8a56" stroke-width="0.8" opacity="0.8"/>
<text x="933.70" y="323.70" font-size="7.3" fill="#1e1e1e" font-weight="bold" textLength="52.80" lengthAdjust="spacingAndGlyphs" >Fct Rev (Local)</text>
<rect x="1005.90" y="319.00" width="10.80" height="2.80" fill="#f0a040" />
<rect x="1009.30" y="318.40" width="4.0" height="4.0" fill="none" stroke="#c88030" stroke-width="0.8" opacity="0.8"/>
<text x="1017.50" y="323.70" font-size="7.3" fill="#1e1e1e" font-weight="bold" textLength="54.60" lengthAdjust="spacingAndGlyphs" >Bgt Rev (Local)</text>
<rect x="1091.90" y="318.40" width="5.10" height="4.90" fill="#a4c4e0" />
<text x="1102.80" y="323.70" font-size="7.3" fill="#1e1e1e" font-weight="bold" textLength="53.50" lengthAdjust="spacingAndGlyphs" >Rm Rev (Local)</text>
<rect x="923.70" y="328.60" width="5.80" height="5.20" fill="#e8e490" />
<text x="933.70" y="334.70" font-size="7.3" fill="#1e1e1e" font-weight="bold" textLength="65.60" lengthAdjust="spacingAndGlyphs" >LY Rm Rev (Local)</text>
<rect x="477.30" y="349.90" width="295.20" height="14.50" fill="#dde9f7" />
<rect x="477.30" y="364.40" width="68.00" height="14.20" fill="#e6e8f2" />
<rect x="545.30" y="364.40" width="227.20" height="14.20" fill="#f3f5fa" />
<rect x="477.30" y="392.80" width="68.00" height="14.20" fill="#e6e8f2" />
<rect x="545.30" y="392.80" width="227.20" height="14.20" fill="#f3f5fa" />
<rect x="477.30" y="421.20" width="68.00" height="14.20" fill="#e6e8f2" />
<rect x="545.30" y="421.20" width="227.20" height="14.20" fill="#f3f5fa" />
<rect x="477.30" y="449.60" width="68.00" height="14.20" fill="#e6e8f2" />
<rect x="545.30" y="449.60" width="227.20" height="14.20" fill="#f3f5fa" />
<rect x="477.30" y="478.00" width="68.00" height="14.20" fill="#e6e8f2" />
<rect x="545.30" y="478.00" width="227.20" height="14.20" fill="#f3f5fa" />
<line x1="477.30" y1="349.50" x2="772.50" y2="349.50" stroke="#ccd1da" stroke-width="1" />
<line x1="477.30" y1="364.50" x2="772.50" y2="364.50" stroke="#ccd1da" stroke-width="1" />
<line x1="477.30" y1="378.50" x2="772.50" y2="378.50" stroke="#ccd1da" stroke-width="1" />
<line x1="477.30" y1="392.50" x2="772.50" y2="392.50" stroke="#ccd1da" stroke-width="1" />
<line x1="477.30" y1="407.50" x2="772.50" y2="407.50" stroke="#ccd1da" stroke-width="1" />
<line x1="477.30" y1="421.50" x2="772.50" y2="421.50" stroke="#ccd1da" stroke-width="1" />
<line x1="477.30" y1="435.50" x2="772.50" y2="435.50" stroke="#ccd1da" stroke-width="1" />
<line x1="477.30" y1="449.50" x2="772.50" y2="449.50" stroke="#ccd1da" stroke-width="1" />
<line x1="477.30" y1="463.50" x2="772.50" y2="463.50" stroke="#ccd1da" stroke-width="1" />
<line x1="477.30" y1="478.50" x2="772.50" y2="478.50" stroke="#ccd1da" stroke-width="1" />
<line x1="477.30" y1="492.50" x2="772.50" y2="492.50" stroke="#ccd1da" stroke-width="1" />
<line x1="477.30" y1="506.50" x2="772.50" y2="506.50" stroke="#ccd1da" stroke-width="1" />
<line x1="477.50" y1="349.90" x2="477.50" y2="506.40" stroke="#ccd1da" stroke-width="1" />
<line x1="545.50" y1="349.90" x2="545.50" y2="506.40" stroke="#ccd1da" stroke-width="1" />
<line x1="577.50" y1="349.90" x2="577.50" y2="506.40" stroke="#ccd1da" stroke-width="1" />
<line x1="610.50" y1="349.90" x2="610.50" y2="506.40" stroke="#ccd1da" stroke-width="1" />
<line x1="641.50" y1="349.90" x2="641.50" y2="506.40" stroke="#ccd1da" stroke-width="1" />
<line x1="673.50" y1="349.90" x2="673.50" y2="506.40" stroke="#ccd1da" stroke-width="1" />
<line x1="706.50" y1="349.90" x2="706.50" y2="506.40" stroke="#ccd1da" stroke-width="1" />
<line x1="739.50" y1="349.90" x2="739.50" y2="506.40" stroke="#ccd1da" stroke-width="1" />
<line x1="772.50" y1="349.90" x2="772.50" y2="506.40" stroke="#ccd1da" stroke-width="1" />
<text x="574.50" y="360.20" font-size="8.2" fill="#23457a" font-weight="bold" text-anchor="end" textLength="26.70" lengthAdjust="spacingAndGlyphs" >Nov-08</text>
<text x="607.50" y="360.20" font-size="8.2" fill="#23457a" font-weight="bold" text-anchor="end" textLength="27.50" lengthAdjust="spacingAndGlyphs" >Dec-08</text>
<text x="638.80" y="360.20" font-size="8.2" fill="#23457a" font-weight="bold" text-anchor="end" textLength="25.80" lengthAdjust="spacingAndGlyphs" >Jan-09</text>
<text x="670.70" y="360.20" font-size="8.2" fill="#23457a" font-weight="bold" text-anchor="end" textLength="26.40" lengthAdjust="spacingAndGlyphs" >Feb-09</text>
<text x="703.40" y="360.20" font-size="8.2" fill="#23457a" font-weight="bold" text-anchor="end" textLength="27.20" lengthAdjust="spacingAndGlyphs" >Mar-09</text>
<text x="736.90" y="360.20" font-size="8.2" fill="#23457a" font-weight="bold" text-anchor="end" textLength="28.00" lengthAdjust="spacingAndGlyphs" >Apr-09</text>
<text x="769.50" y="360.20" font-size="8.2" fill="#23457a" font-weight="bold" text-anchor="end" textLength="27.10" lengthAdjust="spacingAndGlyphs" >May-09</text>
<text x="479.90" y="374.60" font-size="8.6" fill="#2a2a2a" textLength="33.37" lengthAdjust="spacingAndGlyphs" >OTB RNs</text>
<text x="575.20" y="374.60" font-size="8.6" fill="#2a2a2a" text-anchor="end" textLength="13.01" lengthAdjust="spacingAndGlyphs" >871</text>
<text x="608.20" y="374.60" font-size="8.6" fill="#2a2a2a" text-anchor="end" textLength="13.01" lengthAdjust="spacingAndGlyphs" >805</text>
<text x="639.50" y="374.60" font-size="8.6" fill="#2a2a2a" text-anchor="end" textLength="13.01" lengthAdjust="spacingAndGlyphs" >495</text>
<text x="671.40" y="374.60" font-size="8.6" fill="#2a2a2a" text-anchor="end" textLength="13.01" lengthAdjust="spacingAndGlyphs" >334</text>
<text x="704.10" y="374.60" font-size="8.6" fill="#2a2a2a" text-anchor="end" textLength="13.01" lengthAdjust="spacingAndGlyphs" >169</text>
<text x="737.60" y="374.60" font-size="8.6" fill="#2a2a2a" text-anchor="end" textLength="8.68" lengthAdjust="spacingAndGlyphs" >25</text>
<text x="770.20" y="374.60" font-size="8.6" fill="#2a2a2a" text-anchor="end" textLength="13.01" lengthAdjust="spacingAndGlyphs" >270</text>
<text x="479.90" y="388.80" font-size="8.6" fill="#2a2a2a" textLength="36.12" lengthAdjust="spacingAndGlyphs" >STLY RNs</text>
<text x="479.90" y="403.00" font-size="8.6" fill="#2a2a2a" textLength="53.89" lengthAdjust="spacingAndGlyphs" >% of STLY RNs</text>
<text x="479.90" y="417.20" font-size="8.6" fill="#2a2a2a" textLength="28.16" lengthAdjust="spacingAndGlyphs" >Fct RNs</text>
<text x="575.20" y="417.20" font-size="8.6" fill="#2a2a2a" text-anchor="end" textLength="19.52" lengthAdjust="spacingAndGlyphs" >4,128</text>
<text x="608.20" y="417.20" font-size="8.6" fill="#2a2a2a" text-anchor="end" textLength="19.52" lengthAdjust="spacingAndGlyphs" >3,956</text>
<text x="639.50" y="417.20" font-size="8.6" fill="#2a2a2a" text-anchor="end" textLength="19.52" lengthAdjust="spacingAndGlyphs" >3,277</text>
<text x="671.40" y="417.20" font-size="8.6" fill="#2a2a2a" text-anchor="end" textLength="19.52" lengthAdjust="spacingAndGlyphs" >3,631</text>
<text x="704.10" y="417.20" font-size="8.6" fill="#2a2a2a" text-anchor="end" textLength="19.52" lengthAdjust="spacingAndGlyphs" >3,645</text>
<text x="737.60" y="417.20" font-size="8.6" fill="#2a2a2a" text-anchor="end" textLength="19.52" lengthAdjust="spacingAndGlyphs" >3,385</text>
<text x="770.20" y="417.20" font-size="8.6" fill="#2a2a2a" text-anchor="end" textLength="19.52" lengthAdjust="spacingAndGlyphs" >3,726</text>
<text x="479.90" y="431.40" font-size="8.6" fill="#2a2a2a" textLength="45.94" lengthAdjust="spacingAndGlyphs" >% of Fct RNs</text>
<text x="575.20" y="431.40" font-size="8.6" fill="#2a2a2a" text-anchor="end" textLength="22.12" lengthAdjust="spacingAndGlyphs" >21.1%</text>
<text x="608.20" y="431.40" font-size="8.6" fill="#2a2a2a" text-anchor="end" textLength="22.12" lengthAdjust="spacingAndGlyphs" >20.3%</text>
<text x="639.50" y="431.40" font-size="8.6" fill="#2a2a2a" text-anchor="end" textLength="22.12" lengthAdjust="spacingAndGlyphs" >15.1%</text>
<text x="671.40" y="431.40" font-size="8.6" fill="#2a2a2a" text-anchor="end" textLength="17.78" lengthAdjust="spacingAndGlyphs" >9.2%</text>
<text x="704.10" y="431.40" font-size="8.6" fill="#2a2a2a" text-anchor="end" textLength="17.78" lengthAdjust="spacingAndGlyphs" >4.6%</text>
<text x="737.60" y="431.40" font-size="8.6" fill="#2a2a2a" text-anchor="end" textLength="17.78" lengthAdjust="spacingAndGlyphs" >0.7%</text>
<text x="770.20" y="431.40" font-size="8.6" fill="#2a2a2a" text-anchor="end" textLength="17.78" lengthAdjust="spacingAndGlyphs" >7.2%</text>
<text x="479.90" y="445.60" font-size="8.6" fill="#2a2a2a" textLength="29.04" lengthAdjust="spacingAndGlyphs" >Bgt RNs</text>
<text x="575.20" y="445.60" font-size="8.6" fill="#2a2a2a" text-anchor="end" textLength="19.52" lengthAdjust="spacingAndGlyphs" >3,843</text>
<text x="608.20" y="445.60" font-size="8.6" fill="#2a2a2a" text-anchor="end" textLength="19.52" lengthAdjust="spacingAndGlyphs" >3,509</text>
<text x="639.50" y="445.60" font-size="8.6" fill="#2a2a2a" text-anchor="end" textLength="19.52" lengthAdjust="spacingAndGlyphs" >2,964</text>
<text x="671.40" y="445.60" font-size="8.6" fill="#2a2a2a" text-anchor="end" textLength="19.52" lengthAdjust="spacingAndGlyphs" >3,269</text>
<text x="704.10" y="445.60" font-size="8.6" fill="#2a2a2a" text-anchor="end" textLength="19.52" lengthAdjust="spacingAndGlyphs" >3,285</text>
<text x="737.60" y="445.60" font-size="8.6" fill="#2a2a2a" text-anchor="end" textLength="19.52" lengthAdjust="spacingAndGlyphs" >3,061</text>
<text x="770.20" y="445.60" font-size="8.6" fill="#2a2a2a" text-anchor="end" textLength="19.52" lengthAdjust="spacingAndGlyphs" >3,324</text>
<text x="479.90" y="459.80" font-size="8.6" fill="#2a2a2a" textLength="46.81" lengthAdjust="spacingAndGlyphs" >% of Bgt RNs</text>
<text x="575.20" y="459.80" font-size="8.6" fill="#2a2a2a" text-anchor="end" textLength="22.12" lengthAdjust="spacingAndGlyphs" >22.7%</text>
<text x="608.20" y="459.80" font-size="8.6" fill="#2a2a2a" text-anchor="end" textLength="22.12" lengthAdjust="spacingAndGlyphs" >22.9%</text>
<text x="639.50" y="459.80" font-size="8.6" fill="#2a2a2a" text-anchor="end" textLength="22.12" lengthAdjust="spacingAndGlyphs" >16.7%</text>
<text x="671.40" y="459.80" font-size="8.6" fill="#2a2a2a" text-anchor="end" textLength="22.12" lengthAdjust="spacingAndGlyphs" >10.2%</text>
<text x="704.10" y="459.80" font-size="8.6" fill="#2a2a2a" text-anchor="end" textLength="17.78" lengthAdjust="spacingAndGlyphs" >5.1%</text>
<text x="737.60" y="459.80" font-size="8.6" fill="#2a2a2a" text-anchor="end" textLength="17.78" lengthAdjust="spacingAndGlyphs" >0.8%</text>
<text x="770.20" y="459.80" font-size="8.6" fill="#2a2a2a" text-anchor="end" textLength="17.78" lengthAdjust="spacingAndGlyphs" >8.1%</text>
<text x="479.90" y="474.00" font-size="8.6" fill="#2a2a2a" textLength="49.57" lengthAdjust="spacingAndGlyphs" >LY Actual RNs</text>
<text x="575.20" y="474.00" font-size="8.6" fill="#2a2a2a" text-anchor="end" textLength="19.52" lengthAdjust="spacingAndGlyphs" >4,275</text>
<text x="608.20" y="474.00" font-size="8.6" fill="#2a2a2a" text-anchor="end" textLength="19.52" lengthAdjust="spacingAndGlyphs" >3,942</text>
<text x="639.50" y="474.00" font-size="8.6" fill="#2a2a2a" text-anchor="end" textLength="19.52" lengthAdjust="spacingAndGlyphs" >3,200</text>
<text x="671.40" y="474.00" font-size="8.6" fill="#2a2a2a" text-anchor="end" textLength="19.52" lengthAdjust="spacingAndGlyphs" >3,587</text>
<text x="704.10" y="474.00" font-size="8.6" fill="#2a2a2a" text-anchor="end" textLength="19.52" lengthAdjust="spacingAndGlyphs" >3,554</text>
<text x="737.60" y="474.00" font-size="8.6" fill="#2a2a2a" text-anchor="end" textLength="19.52" lengthAdjust="spacingAndGlyphs" >3,393</text>
<text x="770.20" y="474.00" font-size="8.6" fill="#2a2a2a" text-anchor="end" textLength="19.52" lengthAdjust="spacingAndGlyphs" >3,713</text>
<text x="479.90" y="488.20" font-size="8.6" fill="#2a2a2a" textLength="56.93" lengthAdjust="spacingAndGlyphs" >% of LY Act RNs</text>
<text x="575.20" y="488.20" font-size="8.6" fill="#2a2a2a" text-anchor="end" textLength="22.12" lengthAdjust="spacingAndGlyphs" >20.4%</text>
<text x="608.20" y="488.20" font-size="8.6" fill="#2a2a2a" text-anchor="end" textLength="22.12" lengthAdjust="spacingAndGlyphs" >20.4%</text>
<text x="639.50" y="488.20" font-size="8.6" fill="#2a2a2a" text-anchor="end" textLength="22.12" lengthAdjust="spacingAndGlyphs" >15.5%</text>
<text x="671.40" y="488.20" font-size="8.6" fill="#2a2a2a" text-anchor="end" textLength="17.78" lengthAdjust="spacingAndGlyphs" >9.3%</text>
<text x="704.10" y="488.20" font-size="8.6" fill="#2a2a2a" text-anchor="end" textLength="17.78" lengthAdjust="spacingAndGlyphs" >4.8%</text>
<text x="737.60" y="488.20" font-size="8.6" fill="#2a2a2a" text-anchor="end" textLength="17.78" lengthAdjust="spacingAndGlyphs" >0.7%</text>
<text x="770.20" y="488.20" font-size="8.6" fill="#2a2a2a" text-anchor="end" textLength="17.78" lengthAdjust="spacingAndGlyphs" >7.3%</text>
<text x="479.90" y="502.40" font-size="8.6" fill="#2a2a2a" textLength="61.55" lengthAdjust="spacingAndGlyphs" >Reach to Fct RNs</text>
<text x="575.20" y="502.40" font-size="8.6" fill="#2a2a2a" text-anchor="end" textLength="19.52" lengthAdjust="spacingAndGlyphs" >3,257</text>
<text x="608.20" y="502.40" font-size="8.6" fill="#2a2a2a" text-anchor="end" textLength="19.52" lengthAdjust="spacingAndGlyphs" >3,151</text>
<text x="639.50" y="502.40" font-size="8.6" fill="#2a2a2a" text-anchor="end" textLength="19.52" lengthAdjust="spacingAndGlyphs" >2,782</text>
<text x="671.40" y="502.40" font-size="8.6" fill="#2a2a2a" text-anchor="end" textLength="19.52" lengthAdjust="spacingAndGlyphs" >3,297</text>
<text x="704.10" y="502.40" font-size="8.6" fill="#2a2a2a" text-anchor="end" textLength="19.52" lengthAdjust="spacingAndGlyphs" >3,476</text>
<text x="737.60" y="502.40" font-size="8.6" fill="#2a2a2a" text-anchor="end" textLength="19.52" lengthAdjust="spacingAndGlyphs" >3,360</text>
<text x="770.20" y="502.40" font-size="8.6" fill="#2a2a2a" text-anchor="end" textLength="19.52" lengthAdjust="spacingAndGlyphs" >3,456</text>
</svg></body></html>
